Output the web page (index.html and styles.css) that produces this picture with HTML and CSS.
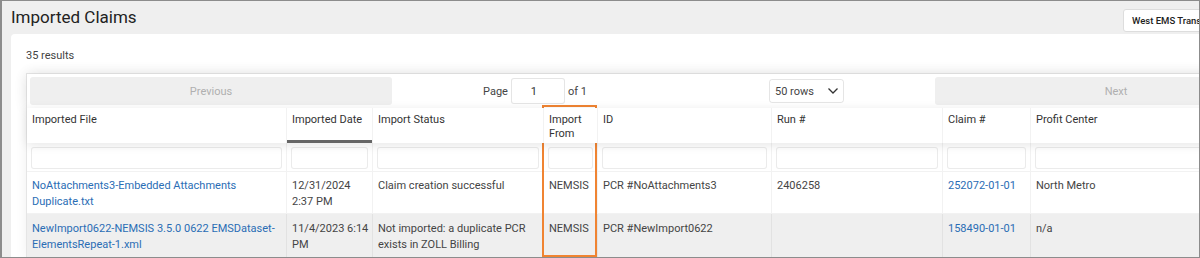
FILE: index.html
```html
<!DOCTYPE html>
<html lang="en">
<head>
    <meta charset="UTF-8">
    <meta name="viewport" content="width=device-width, initial-scale=1.0">
    <title>Imported Claims</title>
    <link rel="stylesheet" href="styles.css">
</head>
<body>
    <div class="frame">
        <div class="topbar">
            <h1>Imported Claims</h1>
            <button class="agency-btn">West EMS Transport Services</button>
        </div>

        <div class="card">
            <div class="results">35 results</div>

            <div class="table-wrap">
                <div class="pagination">
                    <div class="pg-side"><button class="pg-btn" disabled>Previous</button></div>
                    <div class="pg-center">
                        <span class="page-info">Page <input class="page-input" type="text" value="1"> of 1</span>
                        <div class="rows-select">
                            <span>50 rows</span>
                            <svg width="12" height="8" viewBox="0 0 12 8"><path d="M1.5 1.5 L6 6 L10.5 1.5" fill="none" stroke="#333" stroke-width="1.3"/></svg>
                        </div>
                    </div>
                    <div class="pg-side"><button class="pg-btn" disabled>Next</button></div>
                </div>

                <div class="row head">
                    <div class="cell">Imported File</div>
                    <div class="cell sorted">Imported Date</div>
                    <div class="cell">Import Status</div>
                    <div class="cell">Import From</div>
                    <div class="cell">ID</div>
                    <div class="cell">Run #</div>
                    <div class="cell">Claim #</div>
                    <div class="cell">Profit Center</div>
                </div>

                <div class="row filters">
                    <div class="cell"><input type="text"></div>
                    <div class="cell"><input type="text"></div>
                    <div class="cell"><input type="text"></div>
                    <div class="cell"><input type="text"></div>
                    <div class="cell"><input type="text"></div>
                    <div class="cell"><input type="text"></div>
                    <div class="cell"><input type="text"></div>
                    <div class="cell"><input type="text"></div>
                </div>

                <div class="row data">
                    <div class="cell"><a href="#">NoAttachments3-Embedded Attachments Duplicate.txt</a></div>
                    <div class="cell">12/31/2024 2:37 PM</div>
                    <div class="cell">Claim creation successful</div>
                    <div class="cell">NEMSIS</div>
                    <div class="cell">PCR #NoAttachments3</div>
                    <div class="cell">2406258</div>
                    <div class="cell"><a href="#">252072-01-01</a></div>
                    <div class="cell">North Metro</div>
                </div>

                <div class="row data odd">
                    <div class="cell"><a href="#">NewImport0622-NEMSIS 3.5.0 0622 EMSDataset-ElementsRepeat-1.xml</a></div>
                    <div class="cell">11/4/2023 6:14 PM</div>
                    <div class="cell">Not imported: a duplicate PCR exists in ZOLL Billing</div>
                    <div class="cell">NEMSIS</div>
                    <div class="cell">PCR #NewImport0622</div>
                    <div class="cell"></div>
                    <div class="cell"><a href="#">158490-01-01</a></div>
                    <div class="cell">n/a</div>
                </div>
            </div>
        </div>

        <div class="highlight"></div>
    </div>
</body>
</html>
```

FILE: styles.css
```css
body {
    margin: 0;
    font-family: Roboto, "Liberation Sans", Arial, sans-serif;
    color: #333;
}
.frame {
    position: relative;
    height: 258px;
    box-sizing: border-box;
    border: 1px solid #8c8c8c;
    border-left-width: 2px;
    background-color: #efefef;
    overflow: hidden;
}
.topbar {
    display: flex;
    justify-content: space-between;
    align-items: center;
    height: 33px;
    padding-left: 9px;
}
h1 {
    margin: 0;
    margin-top: -2px;
    font-size: 17px;
    font-weight: 400;
    line-height: 22px;
    color: #222;
}
.agency-btn {
    flex-shrink: 0;
    width: 150px;
    height: 23px;
    margin-top: 5px;
    margin-right: -74px;
    padding: 0 8px;
    text-align: left;
    white-space: nowrap;
    background-color: white;
    border: 1px solid #ddd;
    border-radius: 3px;
    font-family: inherit;
    font-size: 9.5px;
    font-weight: 500;
    color: #222;
}
.card {
    margin-left: 9px;
    background-color: white;
    border-radius: 4px 0 0 0;
    padding: 14px 0 0 15px;
    height: 240px;
}
.results {
    font-size: 11px;
    line-height: 16px;
    color: #444;
    margin-bottom: 9px;
}
.table-wrap {
    width: 1273px;
    border: 1px solid rgba(0, 0, 0, 0.1);
    box-shadow: 0 0 12px rgba(0, 0, 0, 0.06);
    font-size: 11px;
}
.pagination {
    display: flex;
    align-items: center;
    padding: 3px;
    height: 28px;
    box-shadow: 0 0 15px rgba(0, 0, 0, 0.08);
}
.pg-side {
    flex: 1;
    height: 100%;
}
.pg-btn {
    width: 100%;
    height: 100%;
    border: none;
    border-radius: 3px;
    background-color: #efefef;
    color: #b0b0b0;
    font-family: inherit;
    font-size: 11px;
}
.pg-center {
    flex: 1.5;
    display: flex;
    justify-content: space-around;
    align-items: center;
    color: #444;
}
.page-info {
    display: flex;
    align-items: center;
    gap: 3px;
}
.page-input {
    width: 54px;
    height: 26px;
    box-sizing: border-box;
    border: 1px solid rgba(0, 0, 0, 0.1);
    border-radius: 3px;
    padding: 0 8px 0 0;
    text-align: center;
    font-family: inherit;
    font-size: 11px;
    color: #333;
}
.rows-select {
    display: flex;
    align-items: center;
    justify-content: space-between;
    width: 75px;
    height: 24px;
    box-sizing: border-box;
    padding: 0 4px 0 5px;
    border: 1px solid rgba(0, 0, 0, 0.1);
    border-radius: 3px;
}
.row {
    display: grid;
    grid-template-columns: 260px 86px 171px 54px 174px 171px 88px 1fr;
}
.cell {
    border-right: 1px solid rgba(0, 0, 0, 0.05);
    padding: 0 2px 0 5px;
    overflow: hidden;
}
.head {
    position: relative;
    z-index: 1;
    height: 35px;
    background-color: white;
    box-shadow: 0 2px 10px rgba(0, 0, 0, 0.1);
}
.head .cell {
    padding-top: 5px;
    line-height: 14px;
    color: #333;
}
.head .sorted {
    box-shadow: inset 0 -3px 0 0 #666;
}
.filters {
    height: 29px;
    box-sizing: border-box;
    border-bottom: 1px solid rgba(0, 0, 0, 0.05);
}
.filters .cell {
    padding: 4px 4px 3px;
}
.filters input {
    display: block;
    width: 100%;
    height: 22px;
    box-sizing: border-box;
    border: 1px solid rgba(0, 0, 0, 0.08);
    border-radius: 3px;
}
.data {
    height: 42px;
    box-sizing: border-box;
    border-bottom: 1px solid rgba(0, 0, 0, 0.05);
}
.data .cell {
    padding-top: 6px;
    line-height: 16px;
    color: #444;
}
.data.odd {
    height: 44px;
    background-color: #efefef;
}
.data.odd .cell {
    padding-top: 7px;
}
a {
    color: #2a6db5;
    text-decoration: none;
}
.highlight {
    position: absolute;
    left: 540px;
    top: 104px;
    width: 55px;
    height: 152px;
    box-sizing: border-box;
    border: 2px solid #f08432;
}
```
